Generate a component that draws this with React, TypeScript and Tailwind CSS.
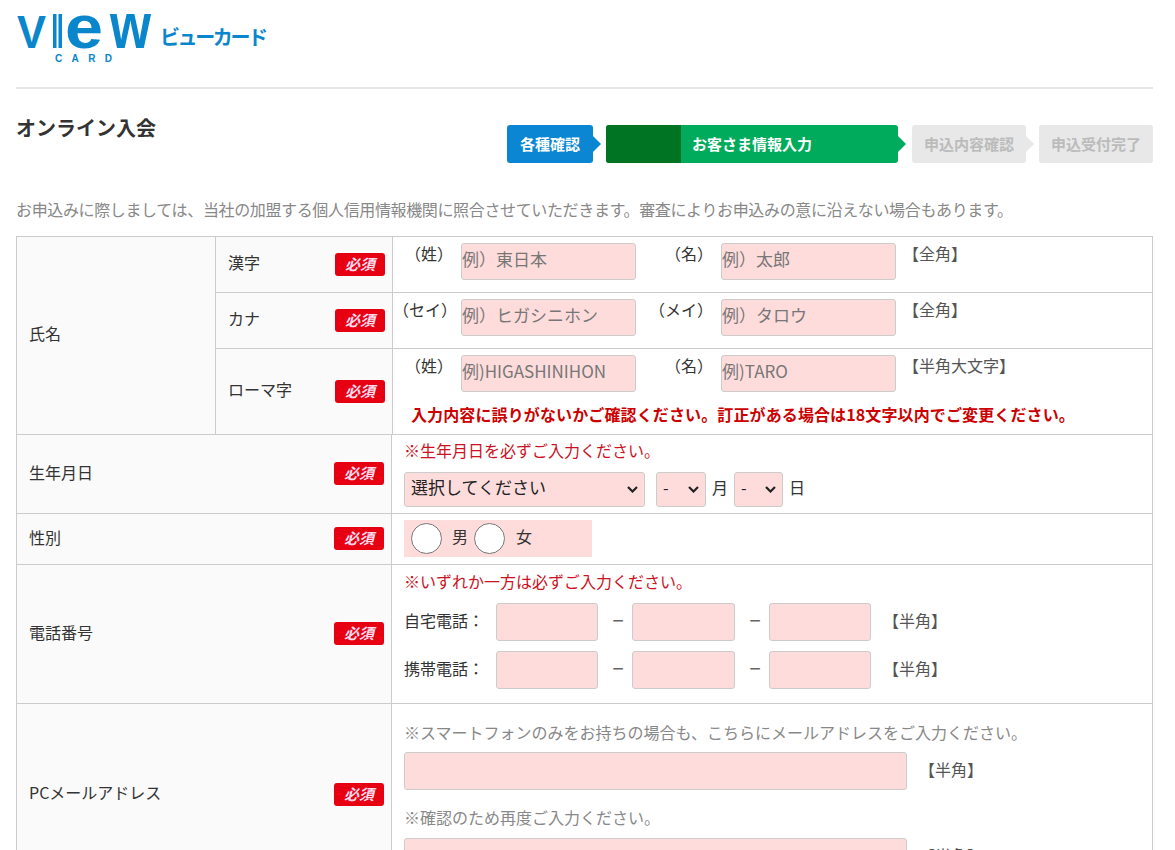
const font = '[font-family:"Noto_Sans_CJK_JP","Liberation_Sans",sans-serif]';

function Logo() {
  return (
    <svg width="270" height="70" viewBox="16 0 270 70" className="block">
      <g fill="#0a86cc" fontFamily='"Liberation Sans", sans-serif' fontWeight="700">
        <text x="17" y="48" fontSize="47" textLength="29" lengthAdjust="spacingAndGlyphs">V</text>
        <rect x="53" y="14" width="3.5" height="34" />
        <rect x="58.5" y="14" width="3.5" height="34" />
        <text x="65" y="48" fontSize="62" textLength="38" lengthAdjust="spacingAndGlyphs">e</text>
        <text x="110" y="48" fontSize="64" textLength="41" lengthAdjust="spacingAndGlyphs">w</text>
        <text x="55" y="62" fontSize="10" textLength="57">CARD</text>
        <text x="160" y="45" fontSize="20" textLength="108" fontFamily='"Noto Sans CJK JP", sans-serif'>ビューカード</text>
      </g>
    </svg>
  );
}

function Arrow({ color }: { color: string }) {
  return <span className={`w-0 h-0 border-y-[8px] border-y-transparent border-l-[8px] ${color}`} />;
}

function Steps() {
  return (
    <div className="flex items-center h-[38px] text-[15px] font-bold">
      <div className="w-[86px] h-full flex items-center justify-center rounded-[3px] bg-[#0a86d2] text-white">各種確認</div>
      <Arrow color="border-l-[#0a86d2]" />
      <div className="ml-[5px] w-[292px] h-full flex rounded-[3px] overflow-hidden bg-[#00ac5c] text-white">
        <div className="w-[75px] bg-[#007423]" />
        <div className="pl-[11px] flex items-center">お客さま情報入力</div>
      </div>
      <Arrow color="border-l-[#00ac5c]" />
      <div className="ml-[6px] w-[114px] h-full flex items-center justify-center rounded-[3px] bg-[#e8e8e8] text-[#bbbbbb]">申込内容確認</div>
      <Arrow color="border-l-[#e8e8e8]" />
      <div className="ml-[5px] w-[114px] h-full flex items-center justify-center rounded-[3px] bg-[#e8e8e8] text-[#bbbbbb]">申込受付完了</div>
    </div>
  );
}

function Badge() {
  return (
    <span className="w-[50px] h-[23px] mb-[1px] flex items-center justify-center rounded-[3px] bg-[#e60012] text-[#fde] text-[15px] font-bold italic shrink-0">
      必須
    </span>
  );
}

const inputBase = 'bg-[#ffdcdc] border border-[#cccccc] rounded-[3px] px-0 pb-[7px] text-[17px] placeholder:text-[#777777] outline-none';

function NameRow({ h, a, b, pa, pb, note }: { h: string; a: string; b: string; pa: string; pb: string; note: string }) {
  return (
    <div className={`flex items-start pt-[6px] ${h}`}>
      <span className="w-[60px] text-right h-[22px] leading-[20px]">{a}</span>
      <input placeholder={pa} className={`ml-2 w-[175px] h-[37px] ${inputBase}`} />
      <span className="w-[77px] text-right h-[22px] leading-[20px]">{b}</span>
      <input placeholder={pb} className={`ml-2 w-[175px] h-[37px] ${inputBase}`} />
      <span className="ml-[7px] h-[22px] leading-[20px] text-[#555555]">{note}</span>
    </div>
  );
}

function SubLabel({ text, h, border }: { text: string; h: string; border?: boolean }) {
  return (
    <div className={`flex items-center justify-between pl-3 pr-[7px] bg-[#fafafa] ${h} ${border ? 'border-b border-[#cccccc]' : ''}`}>
      <span className="pb-[5px]">{text}</span>
      <Badge />
    </div>
  );
}

function Row({ label, h, children }: { label: string; h: string; children: React.ReactNode }) {
  return (
    <div className={`flex border-b border-[#cccccc] ${h}`}>
      <div className="w-[375px] shrink-0 flex items-center justify-between pl-3 pr-[7px] bg-[#fafafa] border-r border-[#cccccc]">
        <span className="pb-[5px]">{label}</span>
        <Badge />
      </div>
      <div className="flex-1 pl-3">{children}</div>
    </div>
  );
}

function PhoneLine({ label, mt }: { label: string; mt: string }) {
  const box = `h-[38px] ${inputBase}`;
  return (
    <div className={`flex items-center h-[38px] ${mt}`}>
      <span className="w-[92px] pb-[5px]">{label}</span>
      <input className={`w-[102px] ${box}`} />
      <span className="w-[34px] text-center text-[20px] pl-[6px] pb-[5px] text-[#666666]">−</span>
      <input className={`w-[103px] ${box}`} />
      <span className="w-[34px] text-center text-[20px] pl-[6px] pb-[5px] text-[#666666]">−</span>
      <input className={`w-[102px] ${box}`} />
      <span className="ml-[12px] pb-[5px] text-[#555555]">【半角】</span>
    </div>
  );
}

function Pick({ w, pl, size, text }: { w: string; pl: string; size: string; text: string }) {
  return (
    <span className={`relative h-[35px] ${w}`}>
      <select className={`appearance-none w-full h-full bg-[#ffdcdc] border border-[#cccccc] rounded-[3px] pb-[6px] text-[#222222] ${pl} ${size}`}>
        <option>{text}</option>
      </select>
      <svg width="11" height="7" viewBox="0 0 11 7" className="absolute right-[7px] top-[14px]" fill="none" stroke="#222222" strokeWidth="2.2">
        <path d="M1 1l4.5 4.5L10 1" />
      </svg>
    </span>
  );
}

export default function App() {
  return (
    <div className={`h-[850px] overflow-hidden bg-white text-[16px] text-[#333333] ${font}`}>
      <div className="mx-4 w-[1137px]">
        <header className="h-[89px] border-b-2 border-[#e5e5e5]">
          <Logo />
        </header>

        <div className="flex justify-between h-[84px]">
          <h1 className="text-[20px] font-bold pt-[25px] leading-[28px]">オンライン入会</h1>
          <div className="pt-9"><Steps /></div>
        </div>

        <p className="h-[63px] pt-[24px] leading-[24px] tracking-[-0.36px] text-[#888888] whitespace-nowrap">
          お申込みに際しましては、当社の加盟する個人信用情報機関に照合させていただきます。審査によりお申込みの意に沿えない場合もあります。
        </p>

        <div className="border border-[#cccccc]">
          <div className="flex border-b border-[#cccccc]">
            <div className="w-[199px] shrink-0 flex items-center pl-3 pb-[5px] bg-[#fafafa] border-r border-[#cccccc]">氏名</div>
            <div className="w-[177px] shrink-0 bg-[#fafafa] border-r border-[#cccccc]">
              <SubLabel text="漢字" h="h-[56px]" border />
              <SubLabel text="カナ" h="h-[56px]" border />
              <SubLabel text="ローマ字" h="h-[85px]" />
            </div>
            <div className="flex-1">
              <div className="border-b border-[#cccccc]">
                <NameRow h="h-[55px]" a="（姓）" b="（名）" pa="例）東日本" pb="例）太郎" note="【全角】" />
              </div>
              <div className="border-b border-[#cccccc]">
                <NameRow h="h-[55px]" a="（セイ）" b="（メイ）" pa="例）ヒガシニホン" pb="例）タロウ" note="【全角】" />
              </div>
              <NameRow h="h-[49px]" a="（姓）" b="（名）" pa="例)HIGASHINIHON" pb="例)TARO" note="【半角大文字】" />
              <p className="h-[36px] pl-[18px] pt-1 leading-[24px] font-bold tracking-[0.12px] text-[#cc0000] whitespace-nowrap">
                入力内容に誤りがないかご確認ください。訂正がある場合は18文字以内でご変更ください。
              </p>
            </div>
          </div>

          <Row label="生年月日" h="h-[79px]">
            <p className="pt-[3px] leading-[24px] text-[#cc1122]">※生年月日を必ずご入力ください。</p>
            <div className="flex items-center mt-[10px]">
              <Pick w="w-[241px]" pl="pl-[6px]" size="text-[17px]" text="選択してください" />
              <span className="w-[11px]" />
              <Pick w="w-[50px]" pl="pl-[6px]" size="text-[16px]" text="-" />
              <span className="w-[28px] text-center pb-[5px]">月</span>
              <Pick w="w-[49px]" pl="pl-[6px]" size="text-[16px]" text="-" />
              <span className="ml-[6px] pb-[5px]">日</span>
            </div>
          </Row>

          <Row label="性別" h="h-[51px]">
            <div className="mt-[6px] w-[188px] h-[37px] bg-[#ffdcdc] flex items-center pl-[7px]">
              <input type="radio" name="sex" className="appearance-none w-[31px] h-[31px] rounded-full bg-white border border-[#777777]" />
              <span className="ml-[10px] w-[22px] pb-[5px]">男</span>
              <input type="radio" name="sex" className="appearance-none w-[31px] h-[31px] rounded-full bg-white border border-[#777777]" />
              <span className="ml-[11px] pb-[5px]">女</span>
            </div>
          </Row>

          <Row label="電話番号" h="h-[139px]">
            <p className="pt-[4px] leading-[24px] text-[#cc1122]">※いずれか一方は必ずご入力ください。</p>
            <PhoneLine label="自宅電話：" mt="mt-[10px]" />
            <PhoneLine label="携帯電話：" mt="mt-[10px]" />
          </Row>

          <Row label="PCメールアドレス" h="h-[182px]">
            <p className="pt-[16px] leading-[24px] text-[#888888]">※スマートフォンのみをお持ちの場合も、こちらにメールアドレスをご入力ください。</p>
            <div className="flex items-center mt-[8px]">
              <input className={`w-[503px] h-[38px] ${inputBase}`} />
              <span className="ml-[12px] pb-[5px] text-[#555555]">【半角】</span>
            </div>
            <p className="mt-[15px] leading-[24px] text-[#888888]">※確認のため再度ご入力ください。</p>
            <div className="flex items-center mt-[9px]">
              <input className={`w-[503px] h-[38px] ${inputBase}`} />
              <span className="ml-[12px] pb-[5px] text-[#555555]">【半角】</span>
            </div>
          </Row>
        </div>
      </div>
    </div>
  );
}
